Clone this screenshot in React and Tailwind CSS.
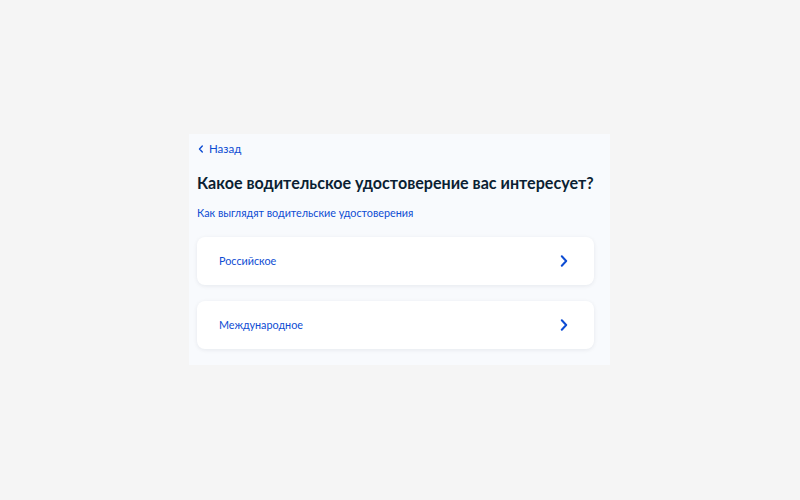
import React from "react";

const OPTIONS = ["Российское", "Международное"];

const Chevron = ({ className }) => (
  <svg width="8" height="12" viewBox="0 0 8 12" fill="none" className={className}>
    <path d="M1.8 1.3L6.2 6L1.8 10.7" stroke="currentColor" strokeWidth="2" strokeLinecap="round" strokeLinejoin="round" />
  </svg>
);

const App = () => {
  return (
    <div className="w-[800px] h-[500px] bg-[#f5f5f5] pt-[134px] pl-[189px]" style={{ fontFamily: "Lato, 'Noto Sans', sans-serif" }}>
      <div className="w-[421px] h-[231px] bg-[#f8fafd] pl-2 pr-4 pt-[8px]">
        <button className="flex items-center gap-[5px] h-[14px] text-[#0d4cd3] text-[11.5px]">
          <svg width="6" height="8" viewBox="0 0 6 8" fill="none" className="ml-[1px]">
            <path d="M4.3 1L1.5 4L4.3 7" stroke="currentColor" strokeWidth="1.4" strokeLinecap="round" strokeLinejoin="round" />
          </svg>
          <span>Назад</span>
        </button>
        <h1 className="mt-[17px] text-[16.1px] leading-[20px] font-bold text-[#0b1f33] whitespace-nowrap">
          Какое водительское удостоверение вас интересует?
        </h1>
        <a className="block mt-[13px] text-[10.8px] leading-[14px] text-[#0d4cd3]">Как выглядят водительские удостоверения</a>
        <div className="mt-[17px] flex flex-col gap-[16px]">
          {OPTIONS.map(label => (
            <div key={label} className="h-[48px] bg-white rounded-[8px] shadow-[0_1px_4px_rgba(11,31,51,0.08)] flex items-center justify-between pl-[22px] pr-[26px]">
              <span className="text-[10.8px] text-[#0d4cd3]">{label}</span>
              <Chevron className="text-[#0d4cd3]" />
            </div>
          ))}
        </div>
      </div>
    </div>
  );
};

export default App;
